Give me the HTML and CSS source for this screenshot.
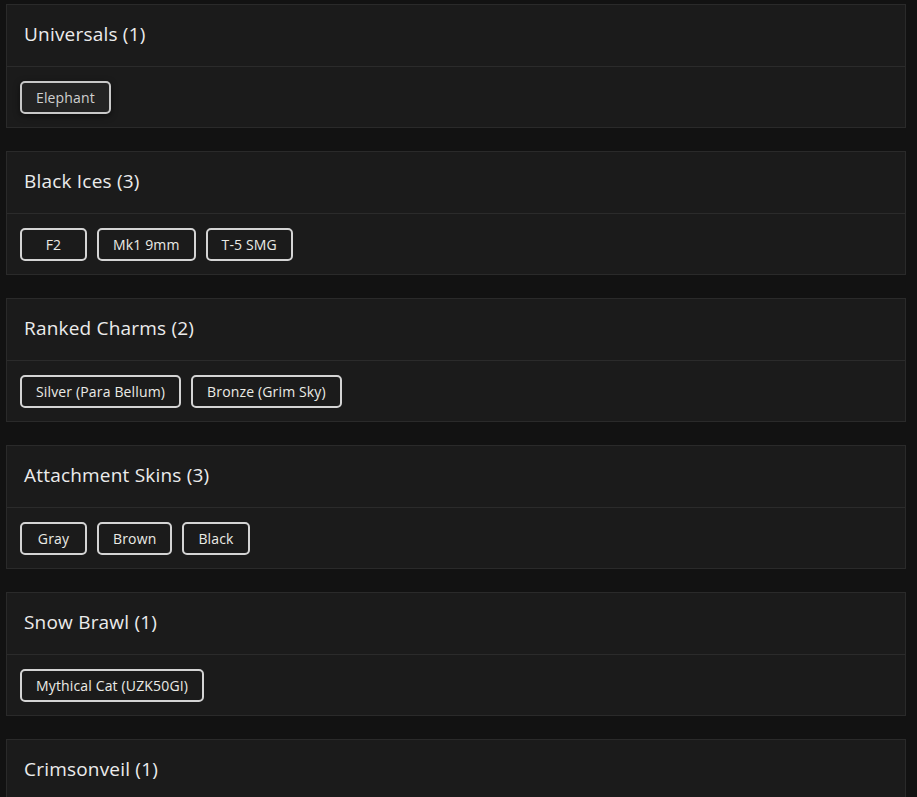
FILE: index.html
```html
<!DOCTYPE html>
<html>
<head>
<meta charset="utf-8">
<link rel="stylesheet" href="styles.css">
</head>
<body>
<div class="list">
  <section class="card">
    <header class="card-head">Universals (1)</header>
    <div class="card-body">
      <span class="chip chip-active">Elephant</span>
    </div>
  </section>
  <section class="card">
    <header class="card-head">Black Ices (3)</header>
    <div class="card-body">
      <span class="chip">F2</span>
      <span class="chip">Mk1 9mm</span>
      <span class="chip">T-5 SMG</span>
    </div>
  </section>
  <section class="card">
    <header class="card-head">Ranked Charms (2)</header>
    <div class="card-body">
      <span class="chip">Silver (Para Bellum)</span>
      <span class="chip">Bronze (Grim Sky)</span>
    </div>
  </section>
  <section class="card">
    <header class="card-head">Attachment Skins (3)</header>
    <div class="card-body">
      <span class="chip">Gray</span>
      <span class="chip">Brown</span>
      <span class="chip">Black</span>
    </div>
  </section>
  <section class="card">
    <header class="card-head">Snow Brawl (1)</header>
    <div class="card-body">
      <span class="chip">Mythical Cat (UZK50GI)</span>
    </div>
  </section>
  <section class="card">
    <header class="card-head">Crimsonveil (1)</header>
  </section>
</div>
</body>
</html>
```
FILE: styles.css
```css
html, body {
  margin: 0;
  padding: 0;
  background: #121212;
}
body {
  font-family: "Open Sans", "Lato", sans-serif;
  color: #e6e6e6;
  overflow: hidden;
  height: 797px;
}
.list {
  padding: 4px 11px 0 6px;
  display: flex;
  flex-direction: column;
  gap: 23px;
}
.card {
  background: #1b1b1b;
  border: 1px solid #2a2a2a;
}
.card-head {
  box-sizing: content-box;
  height: 58px;
  display: flex;
  align-items: center;
  padding: 0 17px 3px;
  font-size: 19px;
  font-weight: 500;
  letter-spacing: 0.2px;
  color: #ececec;
  border-bottom: 1px solid #2b2b2b;
}
.card-body {
  display: flex;
  gap: 10px;
  padding: 14px 13px 13px 13px;
}
.chip {
  height: 33px;
  min-width: 67px;
  box-sizing: border-box;
  display: inline-flex;
  align-items: center;
  justify-content: center;
  padding: 0 14px;
  border: 2px solid #d4d4d4;
  border-radius: 5px;
  font-size: 14px;
  letter-spacing: 0.15px;
  color: #ebebe6;
  background: #1b1b1b;
}
.chip-active {
  background: #232323;
  border-color: #c8c8c8;
  color: #d0d0d0;
  box-shadow: 0 2px 6px rgba(0,0,0,0.5);
}
```
